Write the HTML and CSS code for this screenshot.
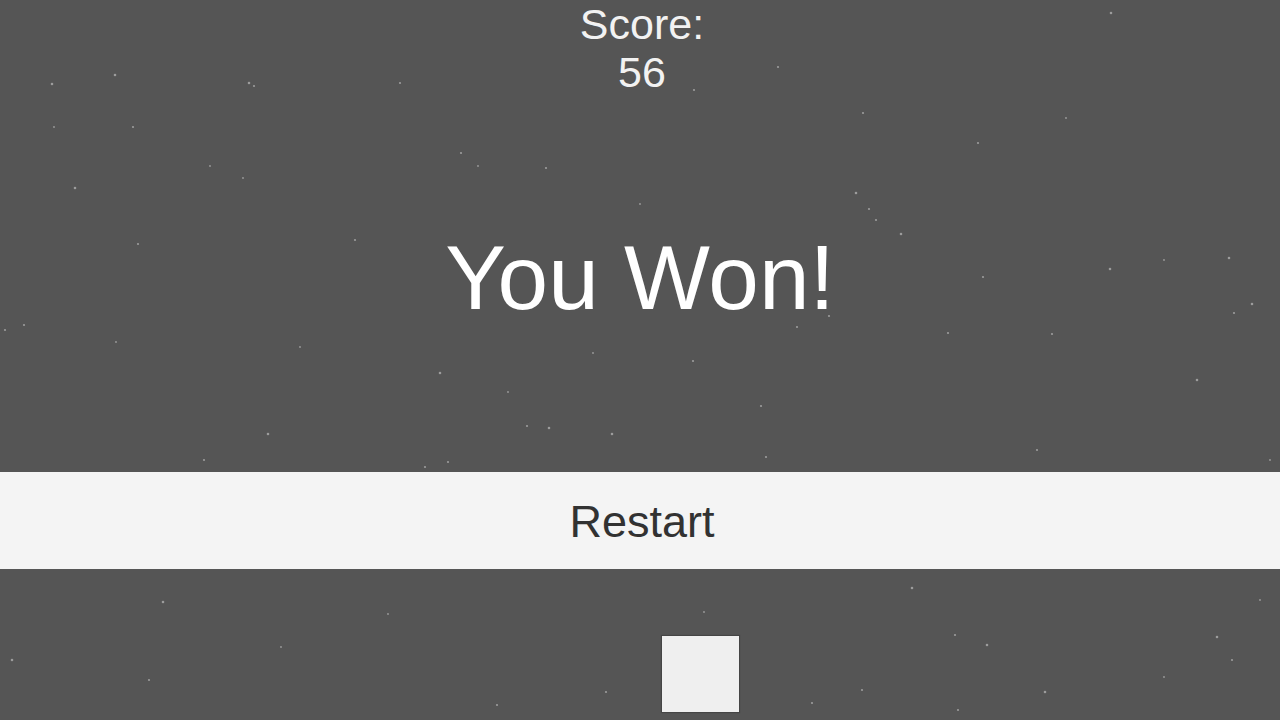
FILE: index.html
```html
<!DOCTYPE html>
<html>
<head>
<meta charset="utf-8">
<link rel="stylesheet" href="styles.css">
</head>
<body>
<svg class="stars" width="1280" height="720" viewBox="0 0 1280 720" aria-hidden="true">
  <g fill="#9c9c9c">
    <circle cx="52" cy="84" r="1.3"/><circle cx="115" cy="75" r="1.3"/><circle cx="249" cy="83" r="1.3"/><circle cx="254" cy="86" r="1.1"/>
    <circle cx="133" cy="127" r="1.1"/><circle cx="54" cy="127" r="0.9"/><circle cx="75" cy="188" r="1.3"/><circle cx="138" cy="244" r="1.1"/>
    <circle cx="210" cy="166" r="0.9"/><circle cx="243" cy="178" r="0.9"/><circle cx="355" cy="240" r="1.1"/><circle cx="400" cy="83" r="1.1"/>
    <circle cx="461" cy="153" r="1.1"/><circle cx="478" cy="166" r="0.9"/><circle cx="546" cy="168" r="1.1"/><circle cx="640" cy="204" r="0.9"/>
    <circle cx="694" cy="90" r="1.1"/><circle cx="778" cy="67" r="1.1"/><circle cx="856" cy="193" r="1.3"/><circle cx="863" cy="113" r="1.1"/>
    <circle cx="869" cy="209" r="1.1"/><circle cx="876" cy="220" r="1.1"/><circle cx="901" cy="234" r="1.3"/><circle cx="978" cy="143" r="1.1"/>
    <circle cx="1066" cy="118" r="0.9"/><circle cx="1111" cy="13" r="1.3"/><circle cx="1110" cy="269" r="1.3"/><circle cx="1164" cy="260" r="0.9"/>
    <circle cx="1229" cy="258" r="1.3"/><circle cx="1252" cy="304" r="1.3"/><circle cx="1234" cy="313" r="1.1"/><circle cx="983" cy="277" r="1.1"/>
    <circle cx="948" cy="333" r="1.1"/><circle cx="1052" cy="334" r="1.1"/><circle cx="797" cy="327" r="1.1"/><circle cx="829" cy="316" r="1.1"/>
    <circle cx="5" cy="330" r="1.1"/><circle cx="24" cy="325" r="1.1"/><circle cx="116" cy="342" r="0.9"/><circle cx="300" cy="347" r="0.9"/>
    <circle cx="440" cy="373" r="1.3"/><circle cx="593" cy="353" r="0.9"/><circle cx="693" cy="361" r="1.1"/><circle cx="761" cy="406" r="1.1"/>
    <circle cx="508" cy="392" r="0.9"/><circle cx="527" cy="426" r="1.1"/><circle cx="549" cy="428" r="1.3"/><circle cx="612" cy="434" r="1.3"/>
    <circle cx="448" cy="462" r="1.1"/><circle cx="425" cy="467" r="1.1"/><circle cx="204" cy="460" r="1.1"/><circle cx="268" cy="434" r="1.3"/>
    <circle cx="1197" cy="380" r="1.3"/><circle cx="1037" cy="450" r="1.1"/><circle cx="766" cy="457" r="1.1"/><circle cx="1270" cy="460" r="0.9"/>
    <circle cx="163" cy="602" r="1.3"/><circle cx="12" cy="660" r="1.3"/><circle cx="149" cy="680" r="1.1"/><circle cx="912" cy="588" r="1.3"/>
    <circle cx="955" cy="635" r="1.1"/><circle cx="987" cy="645" r="1.3"/><circle cx="1217" cy="637" r="1.3"/><circle cx="1232" cy="660" r="1.1"/>
    <circle cx="1045" cy="692" r="1.3"/><circle cx="1164" cy="677" r="0.9"/><circle cx="862" cy="690" r="1.1"/><circle cx="606" cy="692" r="1.1"/>
    <circle cx="1260" cy="600" r="0.9"/><circle cx="388" cy="614" r="0.9"/><circle cx="281" cy="647" r="0.9"/><circle cx="497" cy="705" r="1.1"/>
    <circle cx="704" cy="612" r="0.9"/><circle cx="812" cy="703" r="1.1"/><circle cx="958" cy="710" r="1.1"/>
  </g>
</svg>
<main class="screen">
  <div class="score">
    <div class="score-label">Score:</div>
    <div class="score-value">56</div>
  </div>
  <h1 class="title">You Won!</h1>
  <div class="restart">Restart</div>
  <div class="player"></div>
</main>
</body>
</html>
```

FILE: styles.css
```css
html, body {
  margin: 0;
  padding: 0;
  width: 1280px;
  height: 720px;
  overflow: hidden;
  background: #555555;
  font-family: "Liberation Sans", Arial, sans-serif;
}

.stars {
  position: absolute;
  left: 0;
  top: 0;
  z-index: 0;
}

.screen {
  position: relative;
  z-index: 1;
  display: flex;
  flex-direction: column;
  width: 1280px;
  height: 720px;
}

.score {
  display: flex;
  flex-direction: column;
  align-items: center;
  color: #f2f2f2;
  font-size: 43px;
  line-height: 48px;
  padding-left: 4px;
}

.title {
  margin: 131px 0 0 0;
  text-align: center;
  color: #ffffff;
  font-weight: normal;
  font-size: 91px;
  line-height: 102px;
}

.restart {
  margin-top: 143px;
  height: 97px;
  background: #f4f4f4;
  color: #323232;
  font-size: 45px;
  display: flex;
  align-items: center;
  justify-content: center;
  padding-left: 4px;
  padding-top: 2px;
  box-sizing: border-box;
}

.player {
  margin-top: 67px;
  margin-left: 662px;
  width: 77px;
  height: 76px;
  background: #efefef;
  box-shadow: 0 0 1px 1px rgba(40, 40, 40, 0.35);
}
```
